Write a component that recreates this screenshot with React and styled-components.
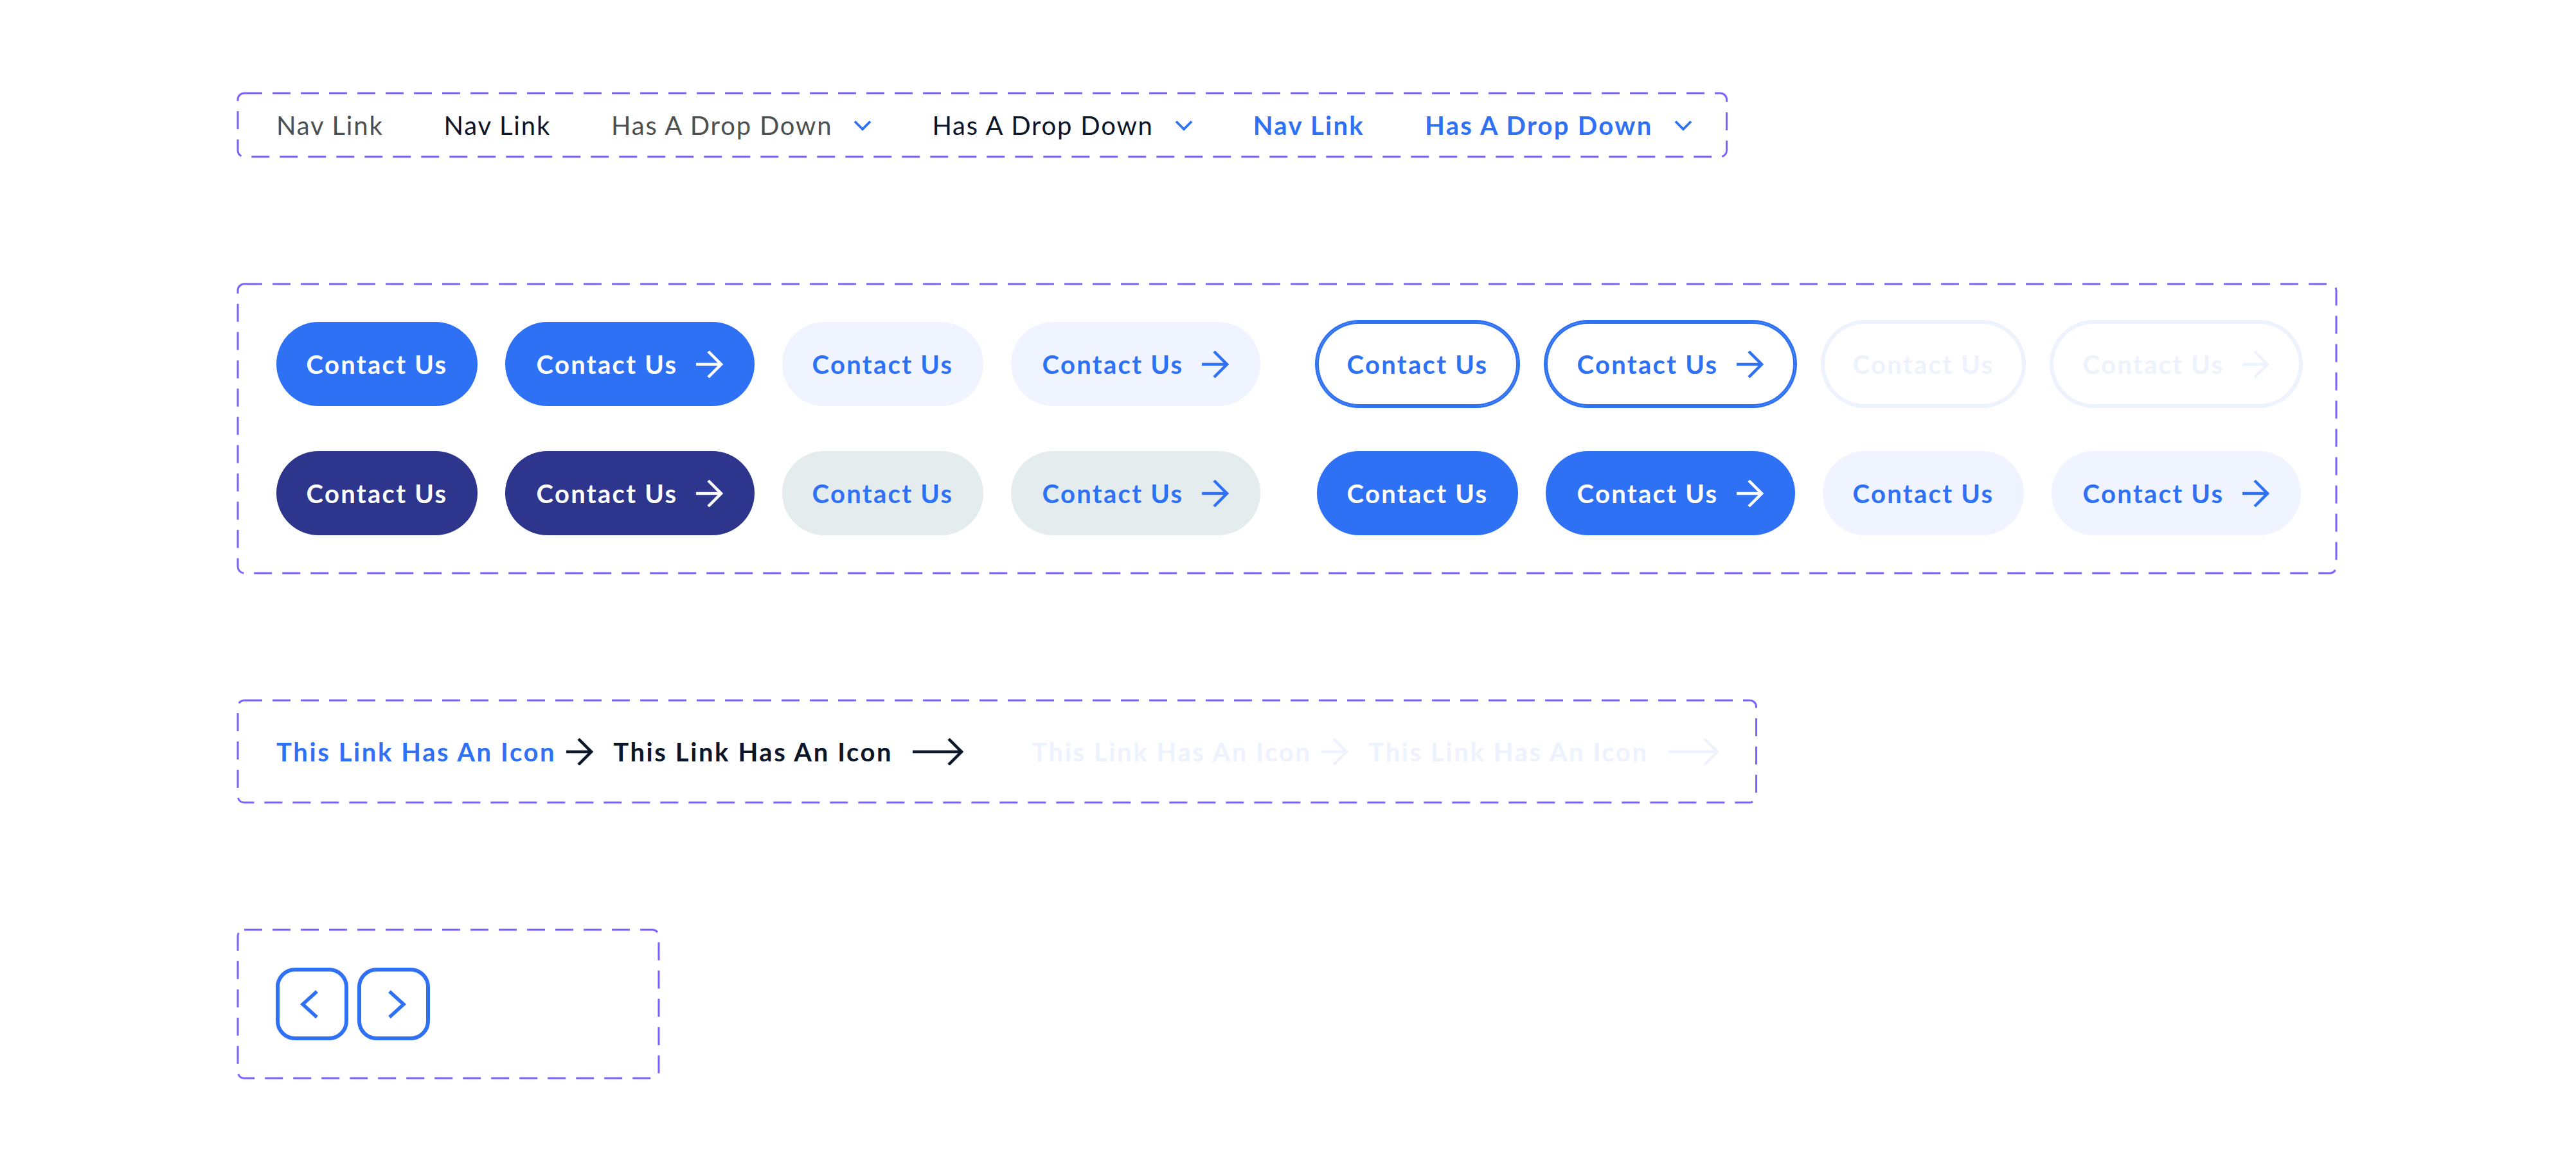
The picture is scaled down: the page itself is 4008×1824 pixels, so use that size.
import React from "react";
import styled, { createGlobalStyle } from "styled-components";

const BLUE = "#2F71F5";
const NAVY = "#2D368C";
const INK = "#0B1628";
const GREY = "#4B5050";
const SOFT = "#EFF4FE";
const MIST = "#E4ECEE";
const GHOST = "#EDF2FD";
const DASH = "#7B61FF";

const GlobalStyle = createGlobalStyle`
  html, body {
    margin: 0;
    padding: 0;
    background: #ffffff;
  }
  body {
    font-family: "Lato", "Liberation Sans", sans-serif;
  }
`;

const Page = styled.div`
  display: flex;
  flex-direction: column;
  align-items: flex-start;
  gap: 198px;
  padding: 145px 0 0 370px;
  min-height: 1824px;
  box-sizing: border-box;
`;

const Frame = styled.div`
  position: relative;
  display: flex;
  box-sizing: border-box;
`;

const Outline = styled.svg`
  position: absolute;
  inset: 0;
  width: 100%;
  height: 100%;
  overflow: visible;
  pointer-events: none;
`;

const DashedBorder = () => (
  <Outline aria-hidden="true">
    <rect
      x="0"
      y="0"
      width="100%"
      height="100%"
      rx="10"
      ry="10"
      fill="none"
      stroke={DASH}
      strokeWidth="3"
      strokeDasharray="28 16"
    />
  </Outline>
);

/* nav */

const NavBar = styled(Frame)`
  height: 99px;
  align-items: center;
  padding: 0 54px 0 60px;
  gap: 94px;
`;

const NavItem = styled.a`
  display: inline-flex;
  align-items: center;
  gap: 33px;
  font-size: 40px;
  line-height: 1;
  font-weight: ${({ $bold }) => ($bold ? 700 : 400)};
  letter-spacing: ${({ $bold }) => ($bold ? 2.3 : 1.8)}px;
  color: ${({ $color }) => $color};
  text-decoration: none;
  white-space: nowrap;
  cursor: pointer;
`;

const Chevron = () => (
  <svg width="28" height="18" viewBox="0 0 28 18" fill="none">
    <path d="M2 3L14 15L26 3" stroke={BLUE} strokeWidth="3.8" />
  </svg>
);

/* buttons */

const ButtonPanel = styled(Frame)`
  flex-direction: column;
  gap: 70px;
  padding: 59px 55px 59px 60px;
`;

const ButtonRow = styled.div`
  display: flex;
  gap: 88px;
`;

const ButtonGroup = styled.div`
  display: flex;
  gap: 43px;
`;

const Button = styled.button`
  width: ${({ $icon }) => ($icon ? 388 : 313)}px;
  height: 131px;
  padding: 0;
  border: none;
  border-radius: 66px;
  display: flex;
  align-items: center;
  justify-content: center;
  gap: 29px;
  font-family: inherit;
  font-size: 40px;
  font-weight: 700;
  letter-spacing: 2.3px;
  line-height: 1;
  background: ${({ $bg }) => $bg};
  color: ${({ $fg }) => $fg};
  box-shadow: ${({ $ring }) =>
    $ring ? `0 0 0 3px ${$ring}, inset 0 0 0 3px ${$ring}` : "none"};
  cursor: pointer;
`;

const Arrow = ({ long, color }) => {
  const w = long ? 79 : 42;
  return (
    <svg width={w} height="42" viewBox={`0 0 ${w} 42`} fill="none">
      <path
        d={`M0 21H${w - 3}M${w - 23} 1L${w - 3} 21L${w - 23} 41`}
        stroke={color}
        strokeWidth="4.5"
      />
    </svg>
  );
};

const variants = {
  primary: { bg: BLUE, fg: "#ffffff" },
  navy: { bg: NAVY, fg: "#ffffff" },
  soft: { bg: SOFT, fg: BLUE },
  mist: { bg: MIST, fg: BLUE },
  outline: { bg: "#ffffff", fg: BLUE, ring: BLUE },
  ghost: { bg: "#ffffff", fg: GHOST, ring: GHOST },
};

const rows = [
  [
    ["primary", "soft"],
    ["outline", "ghost"],
  ],
  [
    ["navy", "mist"],
    ["primary", "soft"],
  ],
];

const ContactButton = ({ kind, icon }) => {
  const v = variants[kind];
  return (
    <Button $icon={icon} $bg={v.bg} $fg={v.fg} $ring={v.ring}>
      Contact Us
      {icon && <Arrow color={v.fg} />}
    </Button>
  );
};

/* links */

const LinkPanel = styled(Frame)`
  height: 159px;
  align-items: center;
  padding: 0 58px 0 60px;
  gap: 106px;
`;

const LinkGroup = styled.div`
  display: flex;
  align-items: center;
  gap: 31px;
`;

const IconLink = styled.a`
  display: inline-flex;
  align-items: center;
  gap: ${({ $long }) => ($long ? 31 : 16)}px;
  font-size: 40px;
  line-height: 1;
  font-weight: 700;
  letter-spacing: 2.6px;
  color: ${({ $color }) => $color};
  text-decoration: none;
  white-space: nowrap;
  cursor: pointer;
`;

/* pager */

const PagerPanel = styled(Frame)`
  width: 655px;
  padding: 59px;
  gap: 14px;
`;

const PageButton = styled.button`
  width: 113px;
  height: 113px;
  box-sizing: border-box;
  padding: 0;
  border: 6px solid ${BLUE};
  border-radius: 30px;
  background: #ffffff;
  display: flex;
  align-items: center;
  justify-content: center;
  cursor: pointer;
  svg {
    transform: ${({ $next }) => ($next ? "scaleX(-1)" : "none")};
  }
`;

const PageChevron = () => (
  <svg width="42" height="48" viewBox="0 0 42 48" fill="none">
    <path d="M28 4L6 24L28 44" stroke={BLUE} strokeWidth="5.5" />
  </svg>
);

export default function App() {
  return (
    <>
      <GlobalStyle />
      <Page>
        <NavBar>
          <DashedBorder />
          <NavItem $color={GREY}>Nav Link</NavItem>
          <NavItem $color={INK}>Nav Link</NavItem>
          <NavItem $color={GREY}>
            Has A Drop Down
            <Chevron />
          </NavItem>
          <NavItem $color={INK}>
            Has A Drop Down
            <Chevron />
          </NavItem>
          <NavItem $color={BLUE} $bold>
            Nav Link
          </NavItem>
          <NavItem $color={BLUE} $bold>
            Has A Drop Down
            <Chevron />
          </NavItem>
        </NavBar>

        <ButtonPanel>
          <DashedBorder />
          {rows.map((row, r) => (
            <ButtonRow key={r}>
              {row.map((group, g) => (
                <ButtonGroup key={g}>
                  {group.map((kind) => (
                    <React.Fragment key={kind}>
                      <ContactButton kind={kind} />
                      <ContactButton kind={kind} icon />
                    </React.Fragment>
                  ))}
                </ButtonGroup>
              ))}
            </ButtonRow>
          ))}
        </ButtonPanel>

        <LinkPanel>
          <DashedBorder />
          <LinkGroup>
            <IconLink $color={BLUE}>
              This Link Has An Icon
              <Arrow color={INK} />
            </IconLink>
            <IconLink $color={INK} $long>
              This Link Has An Icon
              <Arrow color={INK} long />
            </IconLink>
          </LinkGroup>
          <LinkGroup>
            <IconLink $color={GHOST}>
              This Link Has An Icon
              <Arrow color={GHOST} />
            </IconLink>
            <IconLink $color={GHOST} $long>
              This Link Has An Icon
              <Arrow color={GHOST} long />
            </IconLink>
          </LinkGroup>
        </LinkPanel>

        <PagerPanel>
          <DashedBorder />
          <PageButton aria-label="Previous">
            <PageChevron />
          </PageButton>
          <PageButton $next aria-label="Next">
            <PageChevron />
          </PageButton>
        </PagerPanel>
      </Page>
    </>
  );
}
